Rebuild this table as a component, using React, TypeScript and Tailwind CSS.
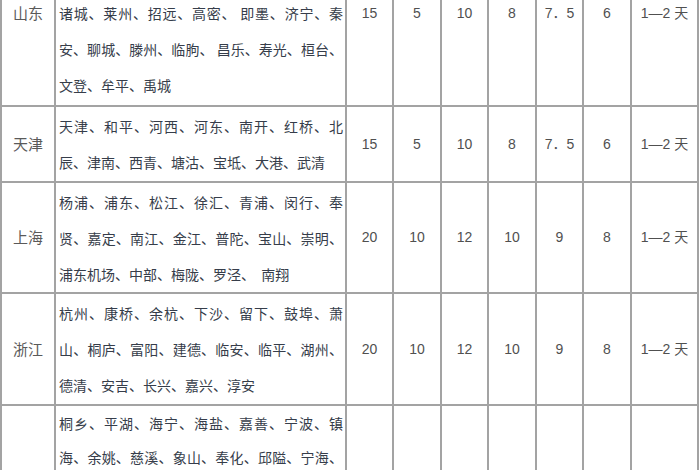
import React from "react";

const cjk = '"Noto Sans CJK SC", "Noto Sans", sans-serif';

type Row = {
  name: string;
  lines: string[];
  nums: string[];
};

const rows: Row[] = [
  {
    name: "山东",
    lines: [
      "济南、青岛、淄博、枣庄、东营、烟台、潍",
      "坊、威海、日照、莱芜、临沂、德州、聊城、",
      "诸城、莱州、招远、高密、 即墨、济宁、秦",
      "安、聊城、滕州、临朐、 昌乐、寿光、桓台、",
      "文登、牟平、禹城",
    ],
    nums: ["15", "5", "10", "8", "7．5", "6", "1—2 天"],
  },
  {
    name: "天津",
    lines: ["天津、和平、河西、河东、南开、红桥、北", "辰、津南、西青、塘沽、宝坻、大港、武清"],
    nums: ["15", "5", "10", "8", "7．5", "6", "1—2 天"],
  },
  {
    name: "上海",
    lines: [
      "杨浦、浦东、松江、徐汇、青浦、闵行、奉",
      "贤、嘉定、南江、金江、普陀、宝山、崇明、",
      "浦东机场、中部、梅陇、罗泾、  南翔",
    ],
    nums: ["20", "10", "12", "10", "9", "8", "1—2 天"],
  },
  {
    name: "浙江",
    lines: [
      "杭州、康桥、余杭、下沙、留下、鼓埠、萧",
      "山、桐庐、富阳、建德、临安、临平、湖州、",
      "德清、安吉、长兴、嘉兴、淳安",
    ],
    nums: ["20", "10", "12", "10", "9", "8", "1—2 天"],
  },
  {
    name: "",
    lines: [
      "桐乡、平湖、海宁、海盐、嘉善、宁波、镇",
      "海、余姚、慈溪、象山、奉化、邱隘、宁海、",
      "北仑、镇海、温州、台州、绍兴、金华、义乌",
      "舟山",
    ],
    nums: ["", "", "", "", "", "", ""],
  },
];

export default function App() {
  return (
    <div className="w-[700px] h-[470px] overflow-hidden bg-white">
      <div className="-mt-[81px] w-[699px] grid grid-cols-[52px_289px_45px_46px_45px_46px_45px_46px_65px] grid-rows-[184px_74px_109px_110px_200px] gap-[2px] p-[2px] bg-[#a3a3a3]">
        {rows.map((r, ri) => (
          <React.Fragment key={ri}>
            <div
              className="bg-white flex items-center justify-center text-[15px] text-[#5a5a5a]"
              style={{ fontFamily: cjk }}
            >
              {r.name}
            </div>
            <div
              className={
                "bg-white flex flex-col pl-[3px] pr-[2px] text-[14px] text-[#363d4a] " +
                (ri === 4 ? "justify-start leading-[34px]" : "justify-center leading-[36px]")
              }
              style={{ fontFamily: cjk }}
            >
              {r.lines.map((l, li) => (
                <div
                  key={li}
                  className={
                    "whitespace-pre " +
                    (li < r.lines.length - 1 ? "text-justify [text-align-last:justify]" : "text-left")
                  }
                >
                  {l}
                </div>
              ))}
            </div>
            {r.nums.map((n, ni) => (
              <div
                key={ni}
                className="bg-white flex items-center justify-center text-[14px] text-[#505050]"
                style={{ fontFamily: '"Liberation Sans", "Noto Sans CJK SC", sans-serif' }}
              >
                {n}
              </div>
            ))}
          </React.Fragment>
        ))}
      </div>
    </div>
  );
}
